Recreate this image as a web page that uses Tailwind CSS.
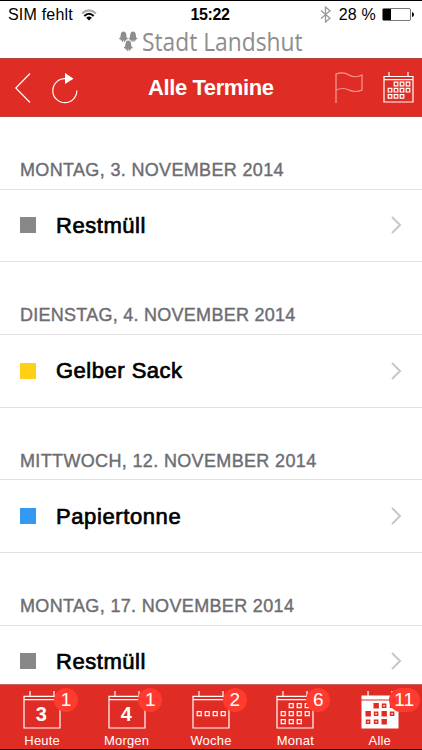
<!DOCTYPE html>
<html lang="de">
<head>
<meta charset="utf-8">
<title>Stadt Landshut – Alle Termine</title>
<script src="https://cdn.jsdelivr.net/npm/@tailwindcss/browser@4"></script>
</head>
<body class="w-[422px] h-[750px] overflow-hidden bg-white font-['Liberation_Sans',Arial,sans-serif] text-black">
<div class="flex flex-col w-[422px] h-[750px] border-y border-black">
  <header class="h-[57px] shrink-0 flex flex-col">
    <div class="h-[27px] grid grid-cols-3 items-center pl-2 pr-2">
      <div class="flex items-center gap-2 whitespace-nowrap text-[16px] tracking-[0.2px]">SIM fehlt
        <svg width="16" height="12" viewBox="0 0 16 12" fill="none" stroke-width="2"><path d="M1 4.5Q8-1.7 15 4.5" stroke="#aaa"/><path d="M3.3 7Q8 2.6 12.7 7" stroke="#000"/><path d="M5.2 8.7Q8 6.2 10.8 8.7L8 11.6Z" fill="#000"/></svg>
      </div>
      <div class="text-center font-bold text-[16px] tracking-[-0.4px] pr-[2px]">15:22</div>
      <div class="flex items-center justify-end whitespace-nowrap text-[16px]">
        <svg class="mr-2" width="11" height="17" viewBox="0 0 11 17" fill="none" stroke="#999" stroke-width="1.3"><path d="M1 4.5L10 12.2L5.5 16V1L10 4.8L1 12.5"/></svg>
        <span class="tracking-[0.2px]">28 %</span>
        <svg class="ml-1.5" width="32" height="13" viewBox="0 0 32 13"><rect x=".5" y=".5" width="28" height="12" rx="1.5" fill="#fff" stroke="#777"/><rect x="1" y="1" width="8" height="11" fill="#000"/><path d="M30 4Q32 4.5 32 6.5T30 9Z" fill="#000"/></svg>
      </div>
    </div>
    <div class="h-[30px] flex pl-[119px] pt-[3px] text-[#8d8d8d]">
      <svg class="shrink-0 mr-[4px]" width="19" height="21" viewBox="0 0 19 21" fill="#8d8d8d">
        <g id="helmet"><path d="M1 7Q1.7 5.5 1.7 3.5Q2.2.5 4.5.5T7.3 3.5Q7.3 5.5 8 7Z"/><path d="M.2 6.9h8.6v1.4H.2zM1.6 8h5.8v1.6H1.6zM3 9h1v2H3zM5 9h1v2H5z"/></g>
        <use href="#helmet" x="9.5"/><use href="#helmet" x="4.8" y="9"/>
      </svg>
      <div class="-mt-[2px] origin-left scale-x-[0.876] whitespace-nowrap font-['Open_Sans',sans-serif] text-[26px] leading-[25px]">Stadt Landshut</div>
    </div>
  </header>

  <nav class="h-[59px] shrink-0 bg-[#df2c24] border-y border-[#b5453d] flex items-center pl-[15px] pr-[8px] text-white">
    <svg class="shrink-0" width="16" height="30" viewBox="0 0 16 30" fill="none" stroke="#fff" stroke-width="1.2"><path d="M15 .5L.8 15L15 29.5"/></svg>
    <svg class="shrink-0 ml-[20px]" width="28" height="32" viewBox="0 0 28 32"><path d="M14 6.7A12 12 0 1 0 25.8 18.5" fill="none" stroke="#fff" stroke-width="1.2"/><path d="M14 1L22.5 6.7L14 12Z" fill="#fff"/></svg>
    <h1 class="ml-[69px] w-[160px] whitespace-nowrap text-[22px] font-bold tracking-[-0.4px]">Alle Termine</h1>
    <svg class="shrink-0 ml-[29px]" width="29" height="31" viewBox="0 0 29 31" fill="none" stroke="#f39c97" stroke-width="1.2"><path d="M1 31V2Q8-.5 14 3T27 3V18Q20 21 14 18T1 18"/></svg>
    <svg class="shrink-0 ml-[19px]" width="31" height="31" viewBox="0 0 31 31" fill="none" stroke="#fff" stroke-width="1.2"><path d="M1 4.5H30V30H1ZM1 7.7H30M6 0V5M25 0V5"/><path d="M11.2 10.2h3.6v3.6h-3.6zM17.2 10.2h3.6v3.6h-3.6zM23.2 10.2h3.6v3.6h-3.6zM5.2 16.4h3.6V20H5.2zM11.2 16.4h3.6V20h-3.6zM17.2 16.4h3.6V20h-3.6zM23.2 16.4h3.6V20h-3.6zM5.2 22.6h3.6v3.6H5.2zM11.2 22.6h3.6v3.6h-3.6zM17.2 22.6h3.6v3.6h-3.6z"/></svg>
  </nav>

  <main class="flex-1 min-h-0 overflow-hidden flex flex-col">
    <section class="h-[145.33px] shrink-0">
      <h2 class="h-[72.66px] border-b border-[#e2e2e2] pt-[42px] pl-5 text-[18px] leading-[22px] tracking-[0.34px] font-normal text-[#6d6d72] whitespace-nowrap [-webkit-text-stroke:0.4px_#6d6d72]">MONTAG, 3. NOVEMBER 2014</h2>
      <div class="h-[72.67px] border-b border-[#e2e2e2] flex items-center pl-5 pr-[20px]"><i class="size-4 bg-[#888]"></i><span class="ml-5 flex-1 text-[22px] tracking-[0.55px] [-webkit-text-stroke:0.7px_#000]">Restmüll</span><svg width="11" height="18" viewBox="0 0 11 18" fill="none" stroke="#c7c7cc" stroke-width="2"><path d="M1 1L9 9L1 17"/></svg></div>
    </section>
    <section class="h-[145.33px] shrink-0">
      <h2 class="h-[72.66px] border-b border-[#e2e2e2] pt-[42px] pl-5 text-[18px] leading-[22px] tracking-[0.26px] font-normal text-[#6d6d72] whitespace-nowrap [-webkit-text-stroke:0.4px_#6d6d72]">DIENSTAG, 4. NOVEMBER 2014</h2>
      <div class="h-[72.67px] border-b border-[#e2e2e2] flex items-center pl-5 pr-[20px]"><i class="size-4 bg-[#ffd015]"></i><span class="ml-5 flex-1 text-[22px] tracking-[0.5px] [-webkit-text-stroke:0.7px_#000]">Gelber Sack</span><svg width="11" height="18" viewBox="0 0 11 18" fill="none" stroke="#c7c7cc" stroke-width="2"><path d="M1 1L9 9L1 17"/></svg></div>
    </section>
    <section class="h-[145.33px] shrink-0">
      <h2 class="h-[72.66px] border-b border-[#e2e2e2] pt-[42px] pl-5 text-[18px] leading-[22px] tracking-[0.35px] font-normal text-[#6d6d72] whitespace-nowrap [-webkit-text-stroke:0.4px_#6d6d72]">MITTWOCH, 12. NOVEMBER 2014</h2>
      <div class="h-[72.67px] border-b border-[#e2e2e2] flex items-center pl-5 pr-[20px]"><i class="size-4 bg-[#3399f3]"></i><span class="ml-5 flex-1 text-[22px] tracking-[0.6px] [-webkit-text-stroke:0.7px_#000]">Papiertonne</span><svg width="11" height="18" viewBox="0 0 11 18" fill="none" stroke="#c7c7cc" stroke-width="2"><path d="M1 1L9 9L1 17"/></svg></div>
    </section>
    <section class="h-[145.33px] shrink-0">
      <h2 class="h-[72.66px] border-b border-[#e2e2e2] pt-[42px] pl-5 text-[18px] leading-[22px] tracking-[0.34px] font-normal text-[#6d6d72] whitespace-nowrap [-webkit-text-stroke:0.4px_#6d6d72]">MONTAG, 17. NOVEMBER 2014</h2>
      <div class="h-[72.67px] border-b border-[#e2e2e2] flex items-center pl-5 pr-[20px]"><i class="size-4 bg-[#888]"></i><span class="ml-5 flex-1 text-[22px] tracking-[0.55px] [-webkit-text-stroke:0.7px_#000]">Restmüll</span><svg width="11" height="18" viewBox="0 0 11 18" fill="none" stroke="#c7c7cc" stroke-width="2"><path d="M1 1L9 9L1 17"/></svg></div>
    </section>
  </main>

  <footer class="h-[65px] shrink-0 bg-[#df2c24] border-t border-[#c9635d] grid grid-cols-5 text-white text-[13px] tracking-[0.2px]">
    <div class="relative flex flex-col items-center pt-[6px]">
      <svg width="38" height="38" viewBox="0 0 38 38" fill="none" stroke="#fff" stroke-width="1.2"><path d="M1 5.3H37V37H1ZM1 8.7H37M7 0V6M31 0V6"/><text x="18.5" y="29.5" text-anchor="middle" font-size="20" font-weight="700" fill="#fff" stroke="none">3</text></svg>
      <span class="leading-[15px] mt-[4px]">Heute</span>
      <span class="absolute left-[54px] top-[3px] size-6 rounded-full bg-[#ff3b30] text-center text-[19px] leading-6 tracking-normal">1</span>
    </div>
    <div class="relative flex flex-col items-center pt-[6px]">
      <svg width="38" height="38" viewBox="0 0 38 38" fill="none" stroke="#fff" stroke-width="1.2"><path d="M1 5.3H37V37H1ZM1 8.7H37M7 0V6M31 0V6"/><text x="18.5" y="29.5" text-anchor="middle" font-size="20" font-weight="700" fill="#fff" stroke="none">4</text></svg>
      <span class="leading-[15px] mt-[4px]">Morgen</span>
      <span class="absolute left-[54px] top-[3px] size-6 rounded-full bg-[#ff3b30] text-center text-[19px] leading-6 tracking-normal">1</span>
    </div>
    <div class="relative flex flex-col items-center pt-[6px]">
      <svg width="38" height="38" viewBox="0 0 38 38" fill="none" stroke="#fff" stroke-width="1.2"><path d="M1 5.3H37V37H1ZM1 8.7H37M7 0V6M31 0V6"/><path d="M5.2 20.7h4v4h-4zM13.2 20.7h4v4h-4zM21.2 20.7h4v4h-4zM29.2 20.7h4v4h-4z"/></svg>
      <span class="leading-[15px] mt-[4px]">Woche</span>
      <span class="absolute left-[54px] top-[3px] size-6 rounded-full bg-[#ff3b30] text-center text-[19px] leading-6 tracking-normal">2</span>
    </div>
    <div class="relative flex flex-col items-center pt-[6px]">
      <svg width="38" height="38" viewBox="0 0 38 38" fill="none" stroke="#fff" stroke-width="1.2"><path d="M1 5.3H37V37H1ZM1 8.7H37M7 0V6M31 0V6"/><path d="M13.2 12.7h4v4h-4zM21.2 12.7h4v4h-4zM29.2 12.7h4v4h-4zM5.2 20.7h4v4h-4zM13.2 20.7h4v4h-4zM21.2 20.7h4v4h-4zM29.2 20.7h4v4h-4zM5.2 28.7h4v4h-4zM13.2 28.7h4v4h-4zM21.2 28.7h4v4h-4z"/></svg>
      <span class="leading-[15px] mt-[4px]">Monat</span>
      <span class="absolute left-[53px] top-[3px] size-6 rounded-full bg-[#ff3b30] text-center text-[19px] leading-6 tracking-normal">6</span>
    </div>
    <div class="relative flex flex-col items-center pt-[6px]">
      <svg width="38" height="38" viewBox="0 0 38 38"><path d="M.5 4.5h37v4H.5zM.5 9.5h37v28H.5zM6.4 0h1.3v6H6.4zM30.4 0h1.3v6h-1.3z" fill="#fff"/><path d="M12.5 12h5.4v5.4h-5.4zM20.8 12.5h4.6v4.6h-4.6zM28.8 12.5h4.6v4.6h-4.6zM4.5 20h5.4v5.4H4.5zM12.8 20.5h4.6v4.6h-4.6zM20.5 20h5.4v5.4h-5.4zM28.8 20.5h4.6v4.6h-4.6zM4.8 28.5h4.6v4.6H4.8zM12.8 28.5h4.6v4.6h-4.6zM20.5 28h5.4v5.4h-5.4z" fill="#df2c24"/><path d="M22.4 14h1.4v1.4h-1.4zM30.4 22h1.4v1.4h-1.4zM14.4 22h1.4v1.4h-1.4zM6.4 30h1.4v1.4H6.4zM14.4 30h1.4v1.4h-1.4z" fill="#fff"/></svg>
      <span class="leading-[15px] mt-[4px]">Alle</span>
      <span class="absolute left-[51px] top-[3px] w-[31px] h-6 rounded-full bg-[#ff3b30] text-center text-[19px] leading-6 tracking-normal">11</span>
    </div>
  </footer>
</div>
</body>
</html>
